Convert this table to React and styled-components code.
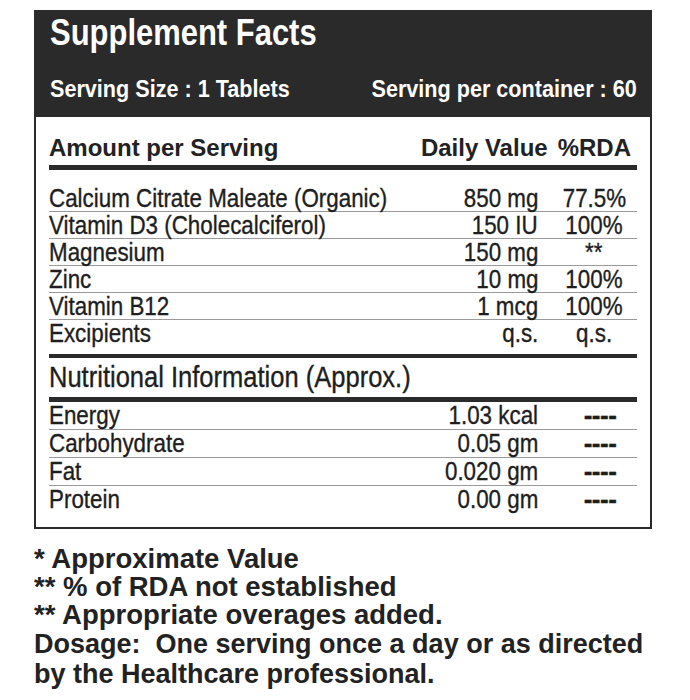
import React from 'react';
import styled, {createGlobalStyle} from 'styled-components';

const GlobalStyle = createGlobalStyle`
    body {
        margin: 0;
        background: #fff;
        font-family: "Liberation Sans", Arial, sans-serif;
        color: #222;
    }
`
const Page = styled.div`
    width: 690px;
    height: 700px;
    padding: 10px 38px 0 34px;
    box-sizing: border-box;
`
const Label = styled.section`
    border: 2px solid #2a2a2a;
    background: #fff;
`
// condensed face is not installed, so the narrow look is done by squeezing the text
const Cond = styled.span`
    display: inline-block;
    white-space: nowrap;
    transform: scaleX(${p => p.$sx || 0.86});
    transform-origin: ${p => p.$origin || 'left'} center;
`
const Header = styled.header`
    background: #2a2a2a;
    color: #fff;
    height: 105px;
    padding: 1px 13px 15px 14px;
    box-sizing: border-box;
    display: flex;
    flex-direction: column;
    justify-content: space-between;
`
const Title = styled.h1`
    margin: 0;
    font-size: 36px;
    font-weight: 700;
    line-height: 40px;
`
const ServingLine = styled.div`
    display: flex;
    justify-content: space-between;
    font-size: 24px;
    font-weight: 700;
    line-height: 26px;
`
const Body = styled.div`
    padding: 0 13px 13px 13px;
`
const ColHead = styled.div`
    display: flex;
    align-items: flex-end;
    font-size: 24px;
    font-weight: 700;
    height: 45px;
    padding-bottom: 3px;
    border-bottom: 5px solid #2a2a2a;
    span:first-child { flex: 1; }
`
const RdaHead = styled.span`
    margin-left: 10px;
    margin-right: 6px;
`
const Rows = styled.div`
    padding-top: 15px;
`
const Row = styled.div`
    display: grid;
    grid-template-columns: minmax(0, 1fr) 120px 86px;
    height: ${p => p.$h || 27}px;
    align-items: center;
    font-size: 25px;
    line-height: ${p => (p.$h || 27) - 3}px;
    color: #1e1e1e;
    -webkit-text-stroke: 0.35px #1e1e1e;
    border-bottom: 1px solid ${p => p.$last ? 'transparent' : '#9a9a9a'};
    box-sizing: border-box;
`
const Value = styled.span`
    text-align: right;
    padding-right: 13px;
`
const Rda = styled.span`
    text-align: center;
`
const Dash = styled.span`
    text-align: center;
    padding-left: 12px;
    font-weight: 700;
    font-size: 26px;
    letter-spacing: -0.5px;
`
const SectionTitle = styled.div`
    margin-top: 7px;
    border-top: 4px solid #2a2a2a;
    border-bottom: 5px solid #2a2a2a;
    font-size: 29px;
    line-height: 39px;
    color: #1e1e1e;
    -webkit-text-stroke: 0.35px #1e1e1e;
`
const Notes = styled.div`
    margin-top: 16px;
    font-weight: 700;
    font-size: 27.5px;
    line-height: 28px;
    color: #222;
`
const Dosage = styled.p`
    margin: 0;
    font-size: 27px;
    line-height: 30px;
`

const ingredients = [
    ['Calcium Citrate Maleate (Organic)', '850 mg', '77.5%'],
    ['Vitamin D3 (Cholecalciferol)', '150 IU', '100%'],
    ['Magnesium', '150 mg', '**'],
    ['Zinc', '10 mg', '100%'],
    ['Vitamin B12', '1 mcg', '100%'],
    ['Excipients', 'q.s.', 'q.s.'],
];

const nutrition = [
    ['Energy', '1.03 kcal'],
    ['Carbohydrate', '0.05 gm'],
    ['Fat', '0.020 gm'],
    ['Protein', '0.00 gm'],
];

export default function App() {
    return (
        <Page>
            <GlobalStyle />
            <Label>
                <Header>
                    <Title><Cond>Supplement Facts</Cond></Title>
                    <ServingLine>
                        <Cond $sx={0.9}>Serving Size : 1 Tablets</Cond>
                        <Cond $sx={0.9} $origin="right">Serving per container : 60</Cond>
                    </ServingLine>
                </Header>
                <Body>
                    <ColHead>
                        <span>Amount per Serving</span>
                        <span>Daily Value</span>
                        <RdaHead>%RDA</RdaHead>
                    </ColHead>
                    <Rows>
                        {ingredients.map((r, i) => (
                            <Row key={r[0]} $last={i === ingredients.length - 1}>
                                <span><Cond $sx={0.895}>{r[0]}</Cond></span>
                                <Value><Cond $sx={0.895} $origin="right">{r[1]}</Cond></Value>
                                <Rda><Cond $sx={0.895} $origin="center">{r[2]}</Cond></Rda>
                            </Row>
                        ))}
                    </Rows>
                    <SectionTitle><Cond $sx={0.88}>Nutritional Information (Approx.)</Cond></SectionTitle>
                    {nutrition.map((r, i) => (
                        <Row key={r[0]} $h={28} $last={i === nutrition.length - 1}>
                            <span><Cond $sx={0.895}>{r[0]}</Cond></span>
                            <Value><Cond $sx={0.895} $origin="right">{r[1]}</Cond></Value>
                            <Dash>----</Dash>
                        </Row>
                    ))}
                </Body>
            </Label>
            <Notes>
                <div>* Approximate Value</div>
                <div>** % of RDA not established</div>
                <div>** Appropriate overages added.</div>
                <Dosage>Dosage:&nbsp; One serving once a day or as directed by the Healthcare professional.</Dosage>
            </Notes>
        </Page>
    );
}
